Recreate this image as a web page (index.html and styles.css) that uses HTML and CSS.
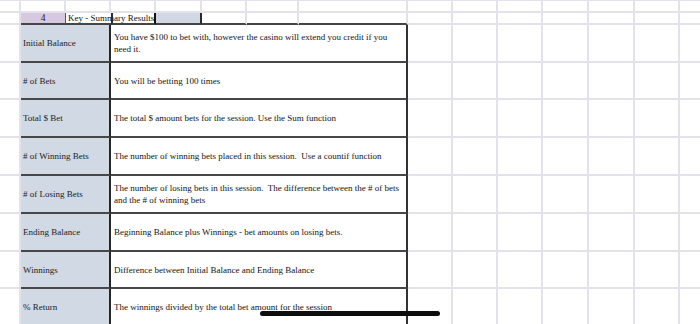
FILE: index.html
```html
<!DOCTYPE html>
<html>
<head>
<meta charset="utf-8">
<link rel="stylesheet" href="styles.css">
</head>
<body>
<div class="page">
  <div class="sheet">
    <!-- row 0 -->
    <div class="c"></div><div class="c"></div><div class="c"></div><div class="c"></div><div class="c"></div><div class="c"></div><div class="c"></div><div class="c"></div><div class="c"></div><div class="c"></div><div class="c"></div><div class="c"></div><div class="c"></div><div class="c"></div><div class="c last"></div>
    <!-- row 1: header -->
    <div class="c"></div>
    <div class="c hnum">4</div>
    <div class="c htitle"><span class="htext">Key - Summary Results</span></div>
    <div class="c hmid"></div>
    <div class="c hblue"></div>
    <div class="c htop"></div><div class="c htop"></div><div class="c htop"></div>
    <div class="c"></div><div class="c"></div><div class="c"></div><div class="c"></div><div class="c"></div><div class="c"></div><div class="c last"></div>

    <!-- table rows -->
    <div class="c"></div>
    <div class="lab">Initial Balance</div>
    <div class="desc">You have $100 to bet with, however the casino will extend you credit if you<br>need it.</div>
    <div class="c"></div><div class="c"></div><div class="c"></div><div class="c"></div><div class="c"></div><div class="c"></div><div class="c last"></div>

    <div class="c"></div>
    <div class="lab"># of Bets</div>
    <div class="desc">You will be betting 100 times</div>
    <div class="c"></div><div class="c"></div><div class="c"></div><div class="c"></div><div class="c"></div><div class="c"></div><div class="c last"></div>

    <div class="c"></div>
    <div class="lab">Total $ Bet</div>
    <div class="desc">The total $ amount bets for the session. Use the Sum function</div>
    <div class="c"></div><div class="c"></div><div class="c"></div><div class="c"></div><div class="c"></div><div class="c"></div><div class="c last"></div>

    <div class="c"></div>
    <div class="lab"># of Winning Bets</div>
    <div class="desc">The number of winning bets placed in this session.&nbsp; Use a countif function</div>
    <div class="c"></div><div class="c"></div><div class="c"></div><div class="c"></div><div class="c"></div><div class="c"></div><div class="c last"></div>

    <div class="c"></div>
    <div class="lab"># of Losing Bets</div>
    <div class="desc">The number of losing bets in this session.&nbsp; The difference between the # of bets<br>and the # of winning bets</div>
    <div class="c"></div><div class="c"></div><div class="c"></div><div class="c"></div><div class="c"></div><div class="c"></div><div class="c last"></div>

    <div class="c"></div>
    <div class="lab">Ending Balance</div>
    <div class="desc">Beginning Balance plus Winnings - bet amounts on losing bets.</div>
    <div class="c"></div><div class="c"></div><div class="c"></div><div class="c"></div><div class="c"></div><div class="c"></div><div class="c last"></div>

    <div class="c"></div>
    <div class="lab">Winnings</div>
    <div class="desc">Difference between Initial Balance and Ending Balance</div>
    <div class="c"></div><div class="c"></div><div class="c"></div><div class="c"></div><div class="c"></div><div class="c"></div><div class="c last"></div>

    <div class="c"></div>
    <div class="lab">% Return</div>
    <div class="desc">The winnings divided by the total bet amount for the session</div>
    <div class="c"></div><div class="c"></div><div class="c"></div><div class="c"></div><div class="c"></div><div class="c"></div><div class="c last"></div>
  </div>
  <div class="marker"></div>
</div>
</body>
</html>
```

FILE: styles.css
```css
* { box-sizing: border-box; }
html, body {
  margin: 0;
  padding: 0;
  background: #ffffff;
  overflow: hidden;
}
.page {
  position: relative;
  width: 700px;
  height: 324px;
  overflow: hidden;
  font-family: "Liberation Serif", "Times New Roman", serif;
  font-size: 9px;
  color: #1a1a1a;
}
.sheet {
  display: grid;
  grid-template-columns: 21px 45px 45px 45px 46px 45px 52px 109px 45px 45px 45px 46px 46px 45px 20px;
  grid-template-rows: 12px 12px 38px 37px 38px 38px 38px 38px 37px 38px;
  border-top: 1px solid #e3e2ea;
}
.c {
  border-right: 2px solid #e3e2ea;
  border-bottom: 2px solid #e3e2ea;
}
.c.last { border-right: none; }

/* header row */
.hnum {
  background: #d6c8de;
  border-right: 1px solid #555;
  border-bottom: 2px solid #454545;
  display: flex;
  align-items: center;
  justify-content: center;
  line-height: 10px;
  font-size: 9.5px;
  color: #222;
}
.htitle {
  border-right: none;
  border-bottom: 2px solid #454545;
  white-space: nowrap;
  overflow: visible;
  line-height: 10px;
  padding-left: 2px;
  font-size: 9px;
  color: #111;
}
.hmid {
  position: relative;
  border-left: 2px solid #2a2a2a;
  border-right: 2px solid #111;
  border-bottom: 2px solid #454545;
}
.hblue {
  background: #cfd8e3;
  border-right: 2px solid #2a2a2a;
  border-bottom: 2px solid #454545;
}
.htop {
  border-bottom: 2px solid #454545;
}

/* table */
.lab {
  grid-column: span 2;
  background: #d0d9e4;
  border-right: 2px solid #262626;
  border-bottom: 2px solid #474747;
  display: flex;
  align-items: center;
  padding-left: 2px;
  line-height: 12px;
  color: #1c1c1c;
}
.desc {
  grid-column: span 5;
  background: #ffffff;
  border-right: 2px solid #333;
  border-bottom: 2px solid #474747;
  display: flex;
  align-items: center;
  padding-left: 3px;
  line-height: 12px;
  color: #141414;
}

.marker {
  position: absolute;
  left: 260px;
  top: 311px;
  width: 180px;
  height: 5px;
  background: #0d0d0d;
  border-radius: 3px;
}
```
